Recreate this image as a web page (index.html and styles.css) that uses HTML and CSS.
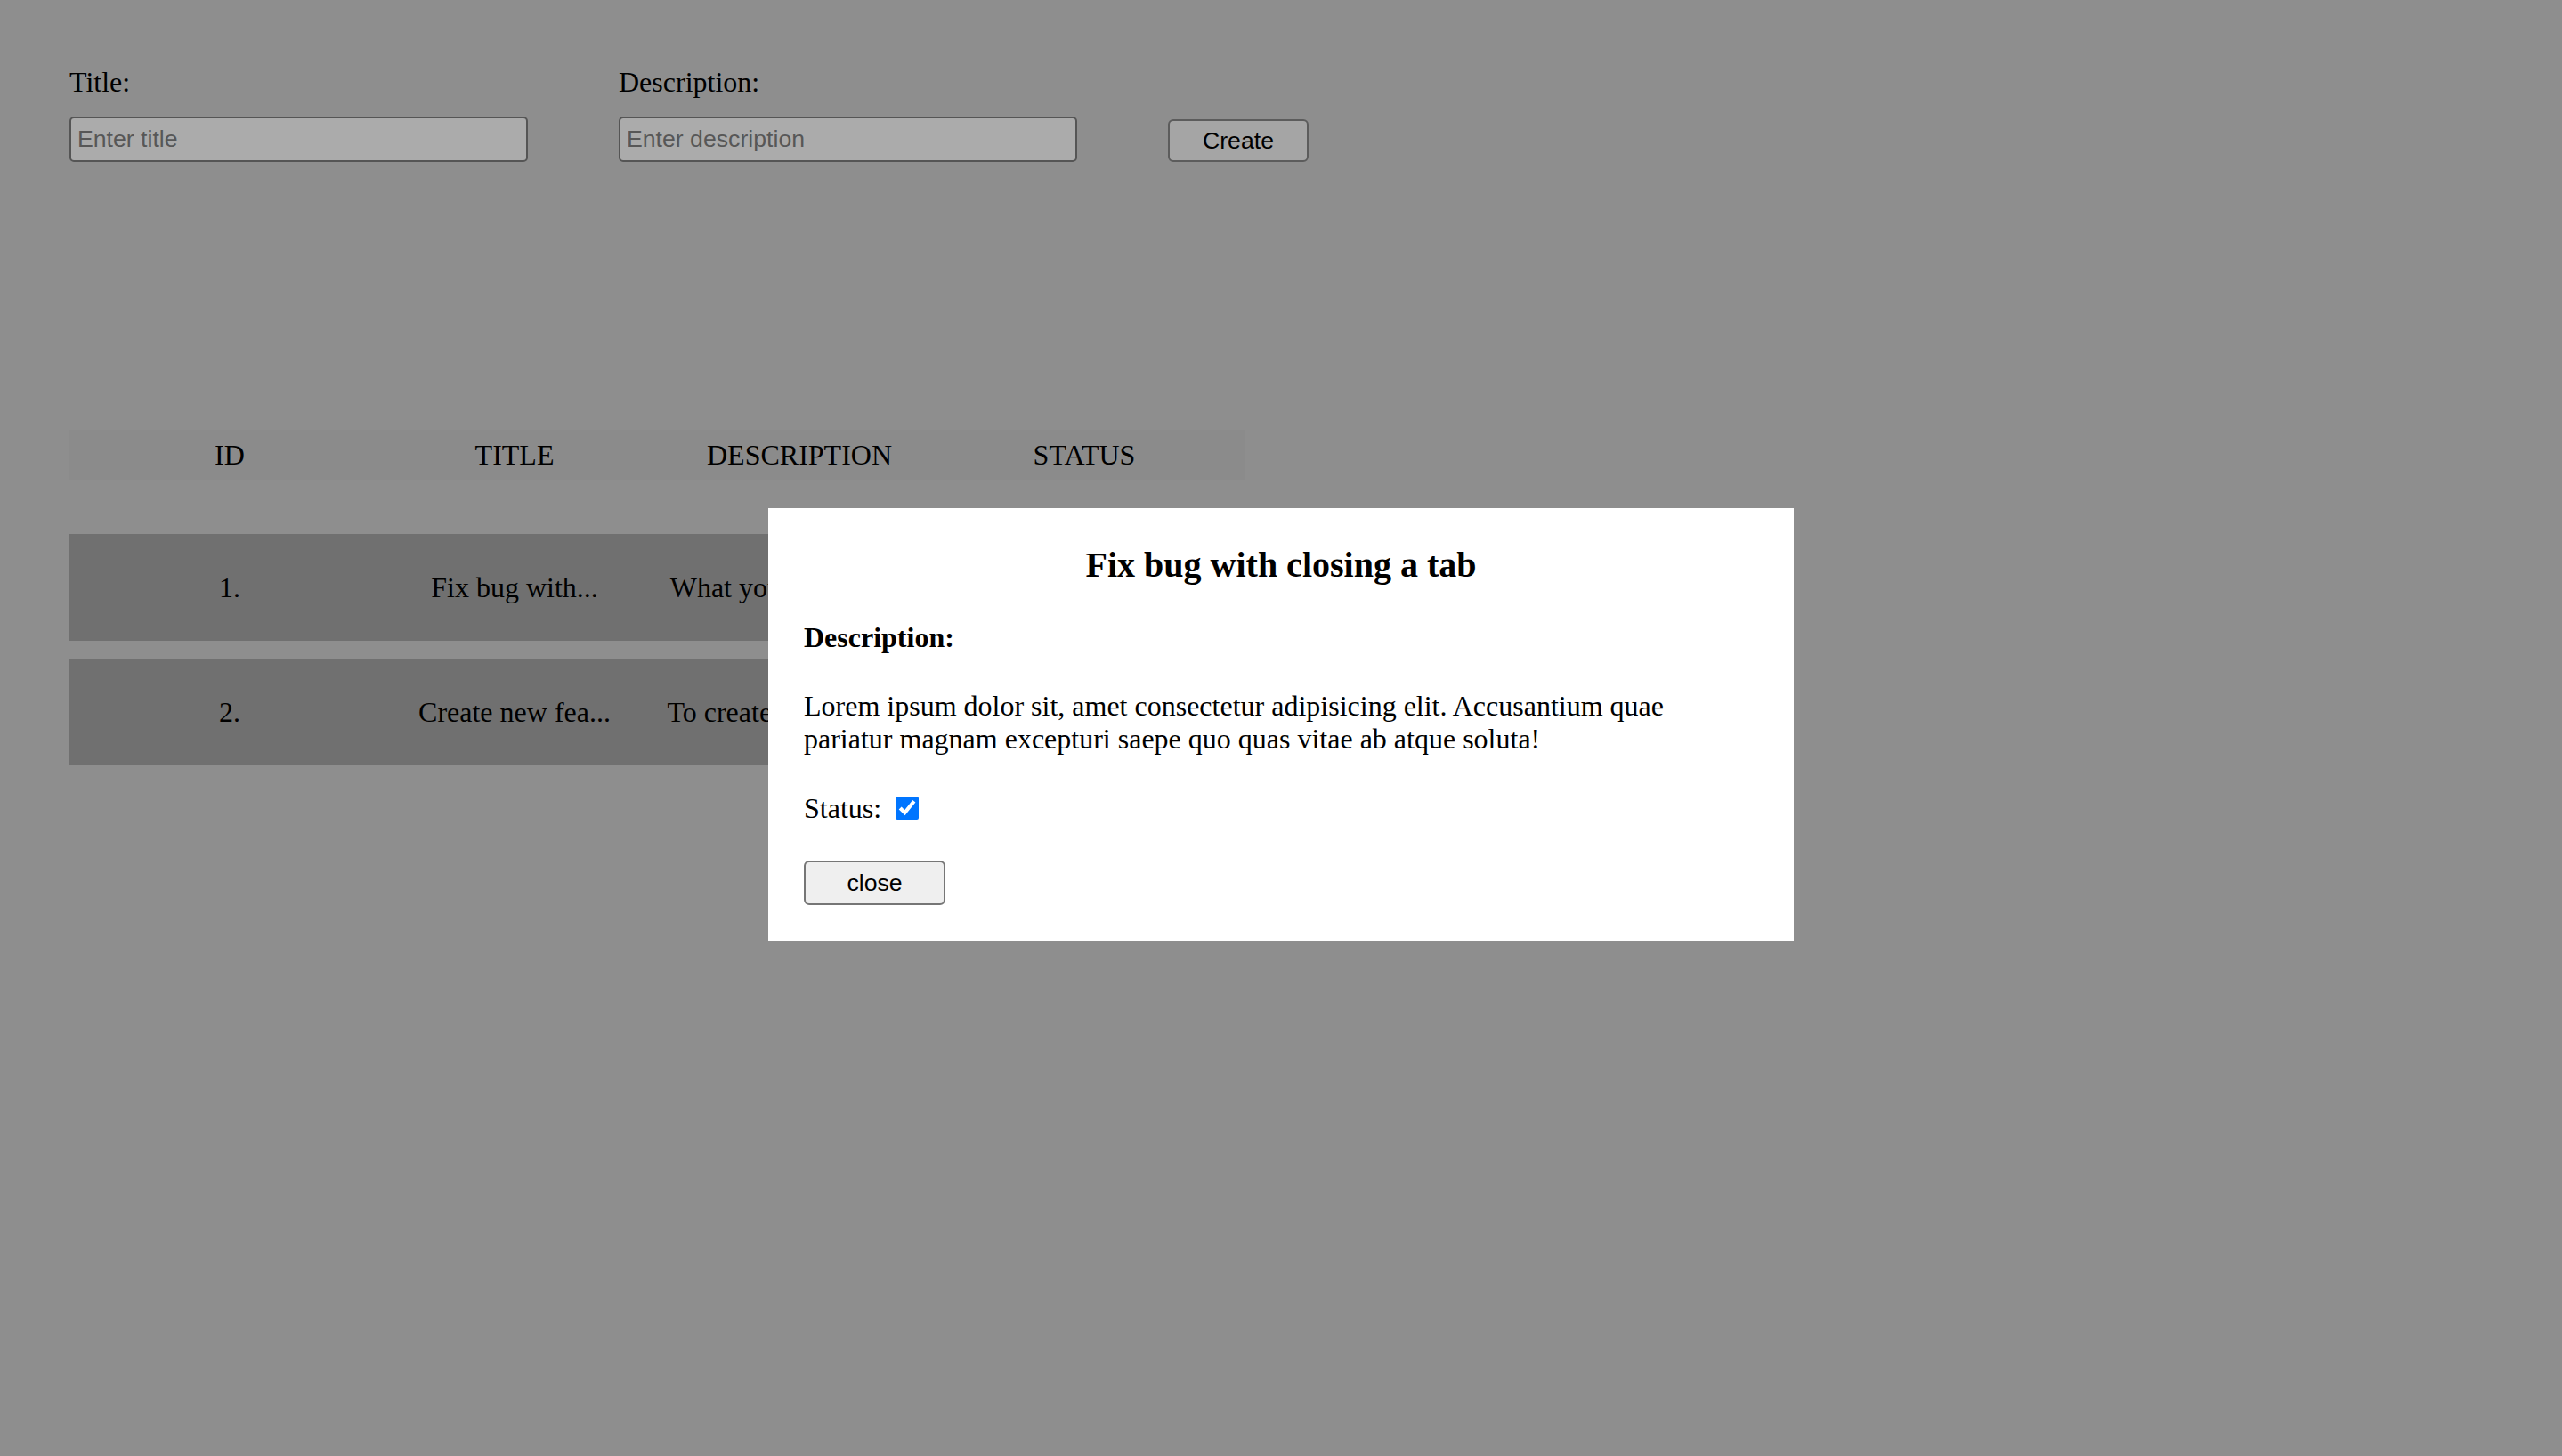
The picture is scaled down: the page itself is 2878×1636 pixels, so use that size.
FILE: index.html
```html
<!DOCTYPE html>
<html lang="en">
<head>
<meta charset="utf-8">
<title>Tasks</title>
<link rel="stylesheet" href="styles.css">
</head>
<body>
<div class="app">
  <form class="create-form">
    <div class="field">
      <label class="field-label" for="title">Title:</label>
      <input class="text-input" id="title" type="text" placeholder="Enter title">
    </div>
    <div class="field">
      <label class="field-label" for="desc">Description:</label>
      <input class="text-input" id="desc" type="text" placeholder="Enter description">
    </div>
    <button class="btn btn-create" type="button">Create</button>
  </form>

  <div class="table">
    <div class="table-head">
      <div class="cell">ID</div>
      <div class="cell">TITLE</div>
      <div class="cell">DESCRIPTION</div>
      <div class="cell">STATUS</div>
    </div>
    <div class="table-body">
      <div class="table-row">
        <div class="cell">1.</div>
        <div class="cell">Fix bug with...</div>
        <div class="cell">What you need to do...</div>
        <div class="cell"><input class="row-check" type="checkbox" checked></div>
      </div>
      <div class="table-row">
        <div class="cell">2.</div>
        <div class="cell">Create new fea...</div>
        <div class="cell">To create a new featu...</div>
        <div class="cell"><input class="row-check" type="checkbox"></div>
      </div>
    </div>
  </div>
</div>

<div class="modal">
  <h2 class="modal-title">Fix bug with closing a tab</h2>
  <p class="modal-label">Description:</p>
  <p class="modal-text">Lorem ipsum dolor sit, amet consectetur adipisicing elit. Accusantium quae pariatur magnam excepturi saepe quo quas vitae ab atque soluta!</p>
  <div class="modal-status">Status: <input class="status-check" type="checkbox" checked></div>
  <button class="btn btn-close" type="button">close</button>
</div>
</body>
</html>
```

FILE: styles.css
```css
html, body {
  margin: 0;
  padding: 0;
}

body {
  background: #8e8e8e;
  font-family: "Liberation Serif", "Times New Roman", serif;
  font-size: 32px;
  color: #000;
  min-height: 100vh;
}

.app {
  padding: 74px 78px;
}

.create-form {
  display: flex;
  align-items: flex-end;
  gap: 102px;
}

.field {
  display: flex;
  flex-direction: column;
  gap: 20px;
}

.field-label {
  font-size: 32px;
}

.text-input {
  box-sizing: border-box;
  width: 515px;
  height: 51px;
  margin: 0;
  padding: 0 7px;
  background: #ababab;
  border: 2px solid #555555;
  border-radius: 5px;
  font-family: "Liberation Sans", Arial, sans-serif;
  font-size: 26.67px;
  color: #000;
  outline: none;
}

.text-input::placeholder {
  color: #575757;
}

.btn {
  box-sizing: border-box;
  margin: 0;
  padding: 0;
  font-family: "Liberation Sans", Arial, sans-serif;
  font-size: 26.67px;
  color: #000;
  border-radius: 6px;
}

.btn-create {
  width: 158px;
  height: 48px;
  background: #a5a5a5;
  border: 2px solid #5c5c5c;
}

.table {
  margin-top: 301px;
  width: 1320px;
}

.table-head,
.table-row {
  box-sizing: border-box;
  display: grid;
  grid-template-columns: repeat(4, 320px);
  align-items: center;
  padding: 0 20px;
  text-align: center;
}

.table-head {
  height: 56px;
  background: #8b8b8b;
}

.table-body {
  margin-top: 61px;
  display: flex;
  flex-direction: column;
  gap: 20px;
}

.table-row {
  height: 120px;
  background: #707070;
}

.row-check {
  width: 26px;
  height: 26px;
  margin: 0;
}

.modal {
  position: fixed;
  top: 571px;
  left: 50%;
  transform: translateX(-50%);
  box-sizing: border-box;
  width: 1152px;
  padding: 40px;
  background: #fff;
  display: flex;
  flex-direction: column;
  align-items: flex-start;
  gap: 40px;
}

.modal-title {
  align-self: stretch;
  margin: 0;
  font-size: 40px;
  font-weight: bold;
  text-align: center;
}

.modal-label {
  margin: 0;
  font-weight: bold;
}

.modal-text {
  margin: 0;
}

.modal-status {
  margin: 0;
}

.status-check {
  width: 26px;
  height: 26px;
  margin: 6px 6px 6px 8px;
  vertical-align: -2px;
  accent-color: #0075ff;
}

.btn-close {
  width: 159px;
  height: 50px;
  background: #efefef;
  border: 2px solid #767676;
}
```
